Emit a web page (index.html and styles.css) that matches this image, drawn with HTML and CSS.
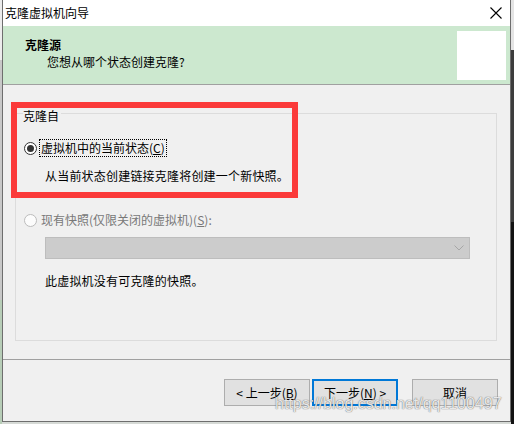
FILE: index.html
```html
<!DOCTYPE html>
<html lang="zh-CN">
<head>
<meta charset="utf-8">
<title>克隆虚拟机向导</title>
<link rel="stylesheet" href="styles.css">
</head>
<body>
<div class="screen">
  <div class="edge-left"></div>
  <div class="window">
    <div class="titlebar">
      <span class="title">克隆虚拟机向导</span>
      <svg class="close" width="12" height="12" viewBox="0 0 12 12"><path d="M0.5 0.5 L11.5 11.5 M11.5 0.5 L0.5 11.5" stroke="#000" stroke-width="1.1" fill="none"/></svg>
    </div>
    <div class="header">
      <div class="header-text">
        <div class="h-title">克隆源</div>
        <div class="h-sub">您想从哪个状态创建克隆?</div>
      </div>
      <div class="header-img"></div>
    </div>
    <div class="content">
      <div class="group">
        <div class="group-label">克隆自</div>
        <div class="radio-row first">
          <span class="radio checked"></span>
          <span class="radio-label focus">虚拟机中的当前状态(<u>C</u>)</span>
        </div>
        <div class="desc">从当前状态创建链接克隆将创建一个新快照。</div>
        <div class="radio-row second disabled">
          <span class="radio"></span>
          <span class="radio-label">现有快照(仅限关闭的虚拟机)(<u>S</u>):</span>
        </div>
        <div class="select">
          <svg class="chev" width="10" height="6" viewBox="0 0 10 6"><path d="M0.5 0.5 L5 5 L9.5 0.5" stroke="#a6a6a6" stroke-width="1" fill="none"/></svg>
        </div>
        <div class="desc note">此虚拟机没有可克隆的快照。</div>
      </div>
    </div>
    <div class="footer">
      <button class="btn">&lt; 上一步(<u>B</u>)</button>
      <button class="btn default">下一步(<u>N</u>) &gt;</button>
      <button class="btn cancel">取消</button>
    </div>
  </div>
  <div class="edge-right"></div>
  <div class="annot"></div>
  <div class="watermark">https://blog.csdn.net/qq1100497</div>
</div>
</body>
</html>
```

FILE: styles.css
```css
html, body {
  margin: 0;
  padding: 0;
}
body {
  width: 514px;
  height: 424px;
  overflow: hidden;
  font-family: "Noto Sans CJK SC", "Noto Sans", sans-serif;
  font-size: 12px;
  color: #000;
}
.screen {
  position: relative;
  width: 514px;
  height: 424px;
  display: flex;
  align-items: flex-start;
  background: #d6dad6;
}
.edge-left {
  width: 2px;
  height: 424px;
  background: linear-gradient(#ececec 0 60px, #c8c8c8 60px 300px, #b7cdb7 300px);
}
.edge-right {
  width: 3px;
  height: 424px;
  background: linear-gradient(#e4e4e4 0 50px, #3c3c3c 50px 222px, #121212 222px);
}
.window {
  width: 509px;
  height: 422px;
  box-sizing: border-box;
  border: 1px solid #6e6e6e;
  border-top: none;
  background: #f0f0f0;
  display: flex;
  flex-direction: column;
}
.titlebar {
  height: 26px;
  background: #fff;
  display: flex;
  align-items: center;
  justify-content: space-between;
  padding-left: 2px;
}
.title {
  line-height: 16px;
}
.close {
  margin-right: 8px;
  display: block;
}
.header {
  height: 58px;
  background: #cce8cf;
  border-bottom: 1px solid #a0a0a0;
  display: flex;
  justify-content: space-between;
  align-items: flex-start;
}
.header-text {
  padding: 11px 0 0 22px;
}
.h-title {
  font-weight: bold;
  line-height: 16px;
}
.h-sub {
  line-height: 16px;
  margin-top: 1px;
  padding-left: 22px;
}
.header-img {
  width: 49px;
  height: 49px;
  background: #fff;
  margin: 5px 4px 0 0;
}
.content {
  height: 274px;
  box-sizing: border-box;
  padding: 28px 0 0 12px;
}
.group {
  width: 482px;
  height: 228px;
  box-sizing: border-box;
  border: 1px solid #dcdcdc;
}
.group-label {
  display: inline-block;
  margin: -6px 0 0 7px;
  padding-right: 2px;
  line-height: 16px;
  background: #f0f0f0;
  vertical-align: top;
}
.radio-row {
  display: flex;
  align-items: center;
  height: 18px;
}
.radio-row.first {
  margin-top: 8px;
}
.radio-row.second {
  margin-top: 27px;
}
.radio {
  width: 13px;
  height: 13px;
  box-sizing: border-box;
  border-radius: 50%;
  border: 1px solid #333;
  background: #fff;
  margin-left: 8px;
  display: flex;
  align-items: center;
  justify-content: center;
}
.radio.checked::after {
  content: "";
  width: 7px;
  height: 7px;
  border-radius: 50%;
  background: #333;
}
.radio-label {
  margin-left: 2px;
  padding: 0 1px;
  line-height: 16px;
  border: 1px dotted transparent;
}
.radio-label.focus {
  border-color: #000;
}
.disabled .radio {
  border-color: #bcbcbc;
  background: #fcfcfc;
}
.disabled .radio-label {
  color: #787878;
}
.desc {
  margin: 11px 0 0 29px;
  line-height: 16px;
  letter-spacing: 0.2px;
}
.desc.note {
  margin-top: 14px;
}
.select {
  margin: 8px 0 0 29px;
  width: 425px;
  height: 22px;
  box-sizing: border-box;
  background: #cccccc;
  border: 1px solid #bdbdbd;
  display: flex;
  align-items: center;
  justify-content: flex-end;
}
.chev {
  display: block;
  margin-right: 5px;
}
.footer {
  flex: 1;
  border-top: 1px solid #a0a0a0;
  display: flex;
  justify-content: flex-end;
  align-items: flex-start;
  padding: 19px 12px 0 0;
}
.btn {
  width: 86px;
  height: 27px;
  box-sizing: border-box;
  background: #e1e1e1;
  border: 1px solid #adadad;
  font-family: "Noto Sans CJK SC", "Noto Sans", sans-serif;
  font-size: 12px;
  color: #000;
  padding: 0;
  line-height: 16px;
  margin: 0;
}
.btn.default {
  margin-left: 2px;
  border: 2px solid #0078d7;
}
.btn.cancel {
  margin-left: 14px;
}
.annot {
  position: absolute;
  left: 11px;
  top: 102px;
  width: 287px;
  height: 96px;
  box-sizing: border-box;
  border: 6px solid #fb3a3a;
  pointer-events: none;
}
.watermark {
  position: absolute;
  left: 275px;
  top: 395px;
  font-family: "Liberation Sans", Arial, sans-serif;
  font-size: 16px;
  line-height: 18px;
  color: rgba(255, 255, 255, 0.85);
  text-shadow: 0 0 1px rgba(90, 90, 90, 0.7), 0 0 1px rgba(90, 90, 90, 0.7);
  white-space: nowrap;
}
```
